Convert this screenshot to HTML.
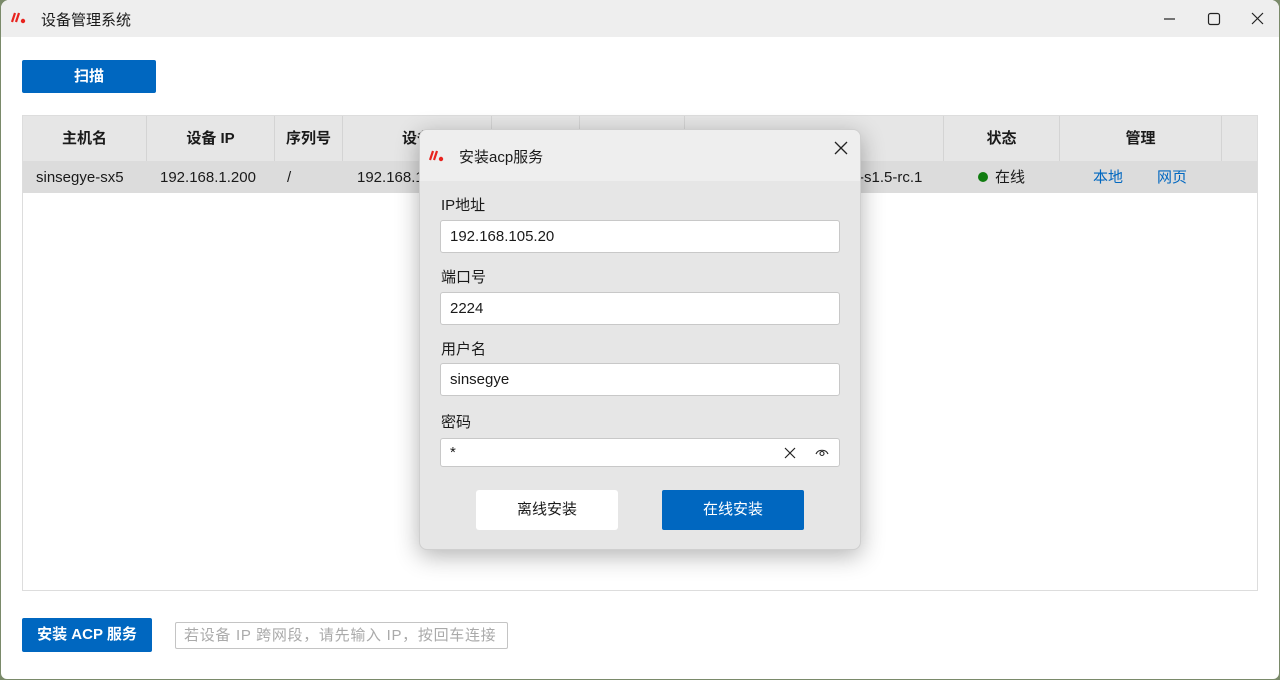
<!DOCTYPE html>
<html><head><meta charset="utf-8"><style>
*{box-sizing:border-box;margin:0;padding:0}
body{width:1280px;height:680px;overflow:hidden;background:#7a8a6a;font-family:"Liberation Sans","Noto Sans CJK SC",sans-serif;position:relative;color:#1a1a1a}
.win{position:absolute;left:1px;top:0;width:1278px;height:679px;background:#fff;border-radius:8px 8px 6px 6px;overflow:hidden}
.tb{height:37px;background:#eeeeee;position:relative}
.tb .t{position:absolute;left:40px;top:9px;font-size:15px}
.btn{position:absolute;background:#0067c0;color:#fff;font-size:15px;font-weight:bold;text-align:center;border-radius:2px}
.tbl{position:absolute;left:21px;top:115px;width:1236px;height:476px;border:1px solid #ddd}
.hd{position:absolute;left:0;top:0;width:1234px;height:45px;background:#e6e6e6}
.row{position:absolute;left:0;top:45px;width:1234px;height:32px;background:#dcdcdc}
.c{position:absolute;top:0;height:45px;line-height:45px;text-align:center;font-size:15px;font-weight:bold;border-right:1px solid #d4d4d4}
.r{position:absolute;top:1px;line-height:32px;font-size:15px}
.dlg{position:absolute;left:419px;top:129px;width:442px;height:421px;background:#e6e6e6;border-radius:8px;box-shadow:0 6px 24px rgba(0,0,0,.3);border:1px solid #cfcfcf;overflow:hidden}
.dt{height:51px;background:#eeeeee;position:relative}
.lbl{position:absolute;left:21px;font-size:15px}
.inp{position:absolute;left:20px;width:400px;height:33px;background:#fff;border:1px solid #c8c8c8;border-radius:3px;font-size:15px;padding-left:9px;line-height:31px}
</style></head><body>
<div class="win">
 <div class="tb">
  <svg style="position:absolute;left:10px;top:12px" width="16" height="12" viewBox="0 0 16 12"><path d="M4 1L1 10M8 1L5 10" stroke="#e8231e" stroke-width="2.2" fill="none"/><circle cx="12" cy="9" r="2.2" fill="#e8231e"/></svg>
  <div class="t">设备管理系统</div>
  <svg style="position:absolute;left:1160px;top:12px" width="110" height="14" viewBox="0 0 110 14"><path d="M3 7H14" stroke="#222" stroke-width="1.2"/><rect x="47.5" y="1.5" width="11" height="11" rx="2" stroke="#222" stroke-width="1.2" fill="none"/><path d="M91 1L102 12M102 1L91 12" stroke="#222" stroke-width="1.2"/></svg>
 </div>
 <div class="btn" style="left:21px;top:60px;width:134px;height:33px;line-height:33px">扫描</div>
 <div class="tbl">
  <div class="hd">
   <div class="c" style="left:0;width:124px">主机名</div>
   <div class="c" style="left:124px;width:128px">设备 IP</div>
   <div class="c" style="left:252px;width:68px">序列号</div>
   <div class="c" style="left:320px;width:149px">设备</div>
   <div class="c" style="left:469px;width:88px"></div>
   <div class="c" style="left:557px;width:105px"></div>
   <div class="c" style="left:662px;width:259px"></div>
   <div class="c" style="left:921px;width:116px">状态</div>
   <div class="c" style="left:1037px;width:162px">管理</div>
  </div>
  <div class="row">
   <div class="r" style="left:13px">sinsegye-sx5</div>
   <div class="r" style="left:137px">192.168.1.200</div>
   <div class="r" style="left:264px">/</div>
   <div class="r" style="left:334px">192.168.1.200</div>
   <div class="r" style="left:836px">-s1.5-rc.1</div>
   <div class="r" style="left:955px"><span style="display:inline-block;width:10px;height:10px;border-radius:5px;background:#107c10;margin-right:7px"></span>在线</div>
   <div class="r" style="left:1070px;color:#0067c0">本地</div>
   <div class="r" style="left:1134px;color:#0067c0">网页</div>
  </div>
 </div>
 <div class="btn" style="left:21px;top:618px;width:130px;height:34px;line-height:34px">安装 ACP 服务</div>
 <div style="position:absolute;left:174px;top:622px;width:333px;height:27px;border:1px solid #c4c4c4;border-radius:2px;font-size:15px;color:#aaa;line-height:25px;padding-left:8px;white-space:nowrap;letter-spacing:0.7px">若设备 IP 跨网段，请先输入 IP，按回车连接</div>
</div>
<div class="dlg">
 <div class="dt">
  <svg style="position:absolute;left:9px;top:20px" width="16" height="12" viewBox="0 0 16 12"><path d="M4 1L1 10M8 1L5 10" stroke="#e8231e" stroke-width="2.2" fill="none"/><circle cx="12" cy="9" r="2.2" fill="#e8231e"/></svg>
  <div style="position:absolute;left:39px;top:16px;font-size:15px">安装acp服务</div>
  <svg style="position:absolute;left:414px;top:11px" width="14" height="14" viewBox="0 0 14 14"><path d="M1 1L13 13M13 1L1 13" stroke="#222" stroke-width="1.3"/></svg>
 </div>
 <div class="lbl" style="top:64px">IP地址</div>
 <div class="inp" style="top:90px">192.168.105.20</div>
 <div class="lbl" style="top:136px">端口号</div>
 <div class="inp" style="top:162px">2224</div>
 <div class="lbl" style="top:208px">用户名</div>
 <div class="inp" style="top:233px">sinsegye</div>
 <div class="lbl" style="top:281px">密码</div>
 <div class="inp" style="top:308px;height:29px;line-height:27px">*
  <svg style="position:absolute;left:343px;top:8px" width="12" height="12" viewBox="0 0 12 12"><path d="M1 1L11 11M11 1L1 11" stroke="#222" stroke-width="1.2"/></svg>
  <svg style="position:absolute;left:374px;top:8px" width="14" height="10" viewBox="0 0 14 10"><path d="M1 7C3 2 11 2 13 7" stroke="#222" stroke-width="1.1" fill="none"/><circle cx="7" cy="6.5" r="2" stroke="#222" stroke-width="1.1" fill="none"/></svg>
 </div>
 <div style="position:absolute;left:56px;top:360px;width:142px;height:40px;background:#fff;border-radius:3px;text-align:center;line-height:40px;font-size:15px">离线安装</div>
 <div class="btn" style="left:242px;top:360px;width:142px;height:40px;line-height:40px;font-weight:normal">在线安装</div>
</div>
</body></html>
